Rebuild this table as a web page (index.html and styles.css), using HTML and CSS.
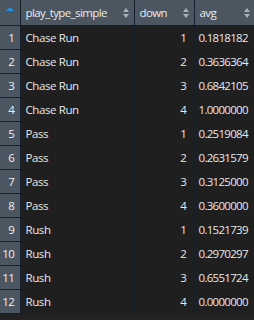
FILE: index.html
```html
<!DOCTYPE html>
<html>
<head>
<meta charset="utf-8">
<link rel="stylesheet" href="styles.css">
</head>
<body>
<table class="grid">
  <colgroup>
    <col class="c-num"><col class="c-type"><col class="c-down"><col class="c-avg">
  </colgroup>
  <thead>
    <tr>
      <th class="num-h"><span class="up-blue"></span></th>
      <th><span class="lbl">play_type_simple</span><span class="sort"></span></th>
      <th><span class="lbl">down</span><span class="sort"></span></th>
      <th><span class="lbl">avg</span><span class="sort"></span></th>
    </tr>
  </thead>
  <tbody>
    <tr><td class="num">1</td><td>Chase Run</td><td class="r">1</td><td class="v">0.1818182</td></tr>
    <tr><td class="num">2</td><td>Chase Run</td><td class="r">2</td><td class="v">0.3636364</td></tr>
    <tr><td class="num">3</td><td>Chase Run</td><td class="r">3</td><td class="v">0.6842105</td></tr>
    <tr><td class="num">4</td><td>Chase Run</td><td class="r">4</td><td class="v">1.0000000</td></tr>
    <tr><td class="num">5</td><td>Pass</td><td class="r">1</td><td class="v">0.2519084</td></tr>
    <tr><td class="num">6</td><td>Pass</td><td class="r">2</td><td class="v">0.2631579</td></tr>
    <tr><td class="num">7</td><td>Pass</td><td class="r">3</td><td class="v">0.3125000</td></tr>
    <tr><td class="num">8</td><td>Pass</td><td class="r">4</td><td class="v">0.3600000</td></tr>
    <tr><td class="num">9</td><td>Rush</td><td class="r">1</td><td class="v">0.1521739</td></tr>
    <tr><td class="num">10</td><td>Rush</td><td class="r">2</td><td class="v">0.2970297</td></tr>
    <tr><td class="num">11</td><td>Rush</td><td class="r">3</td><td class="v">0.6551724</td></tr>
    <tr><td class="num">12</td><td>Rush</td><td class="r">4</td><td class="v">0.0000000</td></tr>
  </tbody>
</table>
</body>
</html>
```
FILE: styles.css
```css
html, body {
  margin: 0;
  padding: 0;
  background: #222222;
}
body {
  font-family: "Open Sans", "Noto Sans", sans-serif;
  font-size: 11.5px;
  letter-spacing: -0.4px;
  color: #e8e8e8;
}
.grid {
  border-collapse: collapse;
  table-layout: fixed;
  width: 255px;
}
.c-num { width: 20px; }
.c-type { width: 114px; }
.c-down { width: 60px; }
.c-avg { width: 61px; }
.grid th, .grid td {
  border: 1px solid #14202b;
  padding: 0 4px 0 5px;
  white-space: nowrap;
  overflow: hidden;
}
.grid tr > :first-child { border-left: none; }
.grid thead th { border-top: none; }
.grid th {
  background: #4b5661;
  height: 25px;
  font-weight: normal;
  text-align: left;
  font-size: 11.5px;
  letter-spacing: -0.6px;
  position: relative;
  color: #eaeaea;
}
.grid td {
  height: 23px;
  background: #1f1f1f;
}
.grid td.num {
  background: #4b5661;
  text-align: right;
  padding: 0 5px 0 0;
  color: #f0f0f0;
}
.grid td.r { text-align: right; padding-right: 7px; }
.grid td.v { padding-left: 4px; letter-spacing: -0.7px; }
.lbl { display: inline-block; }
.sort {
  position: absolute;
  right: 4px;
  top: 8px;
  width: 7px;
  height: 10px;
}
.sort::before, .sort::after {
  content: "";
  position: absolute;
  left: 0;
  border-left: 3.5px solid transparent;
  border-right: 3.5px solid transparent;
}
.sort::before { top: 0; border-bottom: 4px solid #a9b1b8; }
.sort::after { bottom: 0; border-top: 4px solid #a9b1b8; }
.num-h { padding: 0; }
.up-blue {
  position: absolute;
  left: 6px;
  top: 7px;
  border-left: 4px solid transparent;
  border-right: 4px solid transparent;
  border-bottom: 4px solid #1e90e8;
}
```
